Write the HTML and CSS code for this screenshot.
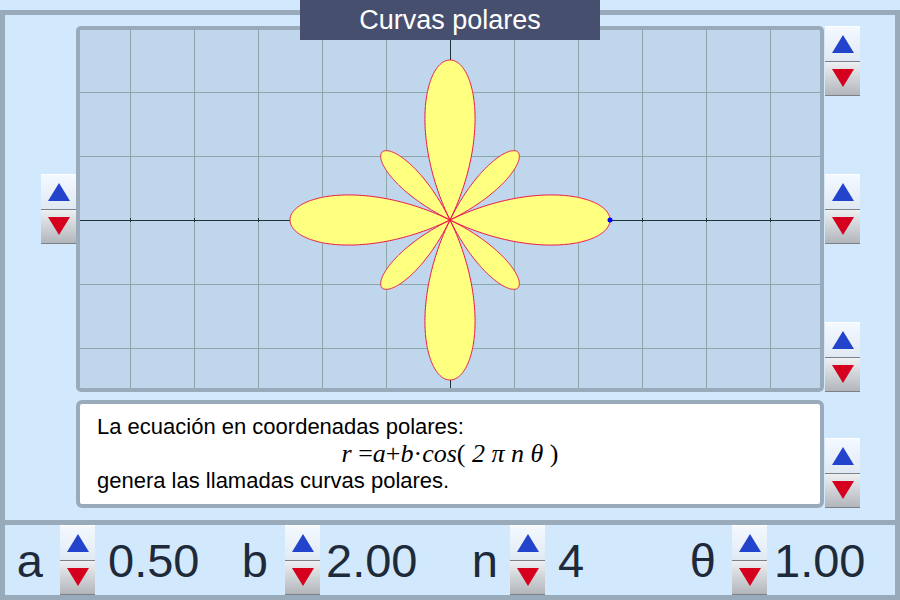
FILE: index.html
```html
<!DOCTYPE html>
<html lang="es">
<head>
  <meta charset="UTF-8">
  <meta name="viewport" content="width=device-width, initial-scale=1.0">
  <title>Curvas polares</title>
  <link rel="stylesheet" href="styles.css">
</head>
<body>
  <div class="title">Curvas polares</div>

  <div class="scene">
    <div class="side-left">
      <div class="spin"><span class="up"></span><span class="down"></span></div>
    </div>

    <div class="graph">
      <svg width="740" height="358" viewBox="0 0 740 358">
        <path class="grid" d="M50 0V358M114 0V358M178 0V358M242 0V358M306 0V358M434 0V358M498 0V358M562 0V358M626 0V358M690 0V358M0 62H740M0 126H740M0 254H740M0 318H740"/>
        <path class="axis" d="M0 190H740M370 0V358"/>
        <path class="axis" d="M50 188v4M114 188v4M178 188v4M242 188v4M306 188v4M434 188v4M498 188v4M562 188v4M626 188v4M690 188v4M368 62h4M368 126h4M368 254h4M368 318h4"/>
        <path id="curve" class="curve" d=""/>
        <circle class="dot" cx="530" cy="190" r="2.5"/>
      </svg>
    </div>

    <div class="side-right">
      <div class="spin"><span class="up"></span><span class="down"></span></div>
      <div class="spin"><span class="up"></span><span class="down"></span></div>
      <div class="spin"><span class="up"></span><span class="down"></span></div>
    </div>

    <div class="note">
      <p>La ecuación en coordenadas polares:</p>
      <p class="formula"><i>r</i> =<i>a</i>+<i>b</i>·<i>cos</i>( <i>2 π n θ</i> )</p>
      <p>genera las llamadas curvas polares.</p>
    </div>

    <div class="side-right bottom">
      <div class="spin"><span class="up"></span><span class="down"></span></div>
    </div>
  </div>

  <div class="controls">
    <div class="param param-a">
      <span class="name">a</span>
      <div class="spin"><span class="up"></span><span class="down"></span></div>
      <span class="value">0.50</span>
    </div>
    <div class="param param-b">
      <span class="name">b</span>
      <div class="spin"><span class="up"></span><span class="down"></span></div>
      <span class="value">2.00</span>
    </div>
    <div class="param param-n">
      <span class="name">n</span>
      <div class="spin"><span class="up"></span><span class="down"></span></div>
      <span class="value">4</span>
    </div>
    <div class="param param-t">
      <span class="name">θ</span>
      <div class="spin"><span class="up"></span><span class="down"></span></div>
      <span class="value">1.00</span>
    </div>
  </div>

  <script>
    // r = a + b cos(2 pi n t), one unit = 64px, origin at (370,190)
    const a = 0.5, b = 2, n = 4;
    const unit = 64, cx = 370, cy = 190;
    let d = '';
    for (let i = 0; i <= 2000; i++) {
      const t = i / 2000;
      const r = a + b * Math.cos(2 * Math.PI * n * t);
      const x = cx + unit * r * Math.cos(2 * Math.PI * t);
      const y = cy - unit * r * Math.sin(2 * Math.PI * t);
      d += (i ? 'L' : 'M') + x.toFixed(2) + ' ' + y.toFixed(2);
    }
    document.getElementById('curve').setAttribute('d', d + 'Z');
  </script>
</body>
</html>
```

FILE: styles.css
```css
body {
  position: relative;
  width: 900px;
  height: 600px;
  margin: 0;
  overflow: hidden;
  background-color: #d2e8fd;
  font-family: 'Liberation Sans', Arial, sans-serif;
  color: #000;
}

.title {
  position: absolute;
  left: 300px;
  top: 0;
  width: 300px;
  height: 40px;
  z-index: 2;
  background-color: #474f6e;
  color: #fff;
  font-size: 27px;
  line-height: 40px;
  text-align: center;
}

.scene {
  box-sizing: border-box;
  height: 510px;
  margin-top: 10px;
  padding-top: 11px;
  border: 5px solid #99aabb;
  border-bottom: none;
  display: grid;
  grid-template-columns: 71px 748px 1fr;
  grid-template-rows: 366px 108px;
  row-gap: 8px;
}

.side-left {
  grid-column: 1;
  grid-row: 1;
  align-self: center;
  justify-self: end;
}

.graph {
  grid-column: 2;
  grid-row: 1;
  box-sizing: border-box;
  border: 4px solid #99aabb;
  border-radius: 5px;
  background-color: #c0d6ec;
  overflow: hidden;
}

.graph svg {
  display: block;
}

.grid {
  stroke: #8ea8a8;
  stroke-width: 1;
  fill: none;
  shape-rendering: crispEdges;
}

.axis {
  stroke: #1c3434;
  stroke-width: 1;
  fill: none;
  shape-rendering: crispEdges;
}

.curve {
  fill: #ffff80;
  stroke: #ee1144;
  stroke-width: 1;
}

.dot {
  fill: #0000ff;
}

.side-right {
  grid-column: 3;
  grid-row: 1;
  margin-left: 1px;
  display: flex;
  flex-direction: column;
  justify-content: space-between;
}

.side-right.bottom {
  grid-row: 2;
  align-self: end;
}

.note {
  grid-column: 2;
  grid-row: 2;
  box-sizing: border-box;
  padding: 9px 17px 0;
  border: 4px solid #99aabb;
  border-radius: 6px;
  background-color: #fff;
  font-size: 22px;
  line-height: 27px;
}

.note p {
  margin: 0;
  height: 27px;
}

.formula {
  text-align: center;
  font-family: 'Liberation Serif', 'Times New Roman', serif;
  font-size: 26px;
}

/* spinner buttons */
.spin {
  width: 35px;
  height: 70px;
  display: flex;
  flex-direction: column;
}

.spin .up,
.spin .down {
  flex: 1;
  display: flex;
  align-items: center;
  justify-content: center;
  box-sizing: border-box;
}

.spin .up {
  border-top: 1px solid #fff;
  border-bottom: 1px solid #7b8189;
  background-image: linear-gradient(to bottom, #f4f9ff, #e0e9f3);
}

.spin .down {
  border-bottom: 1px solid #7b8189;
  background-image: linear-gradient(to bottom, #eef0f2, #b2b6bb);
}

.spin .up::before {
  content: '';
  border-left: 11px solid transparent;
  border-right: 11px solid transparent;
  border-bottom: 18px solid #2244cc;
}

.spin .down::before {
  content: '';
  border-left: 11px solid transparent;
  border-right: 11px solid transparent;
  border-top: 18px solid #d4001e;
}

/* bottom parameter bar */
.controls {
  box-sizing: border-box;
  height: 80px;
  border: 5px solid #99aabb;
  display: flex;
  color: #1e2a3a;
  font-size: 47px;
}

.param {
  width: 225px;
  display: flex;
  align-items: center;
}

.param .name {
  width: 38px;
  padding-right: 17px;
  text-align: right;
}

.param .value {
  margin-left: 13px;
}

.param-b .value {
  margin-left: 6px;
}

.param-n .name {
  width: 43px;
  padding-right: 12px;
}

.param-t {
  width: 215px;
}

.param-t .name {
  width: 36px;
  padding-right: 16px;
}

.param-t .value {
  margin-left: 7px;
}
```
